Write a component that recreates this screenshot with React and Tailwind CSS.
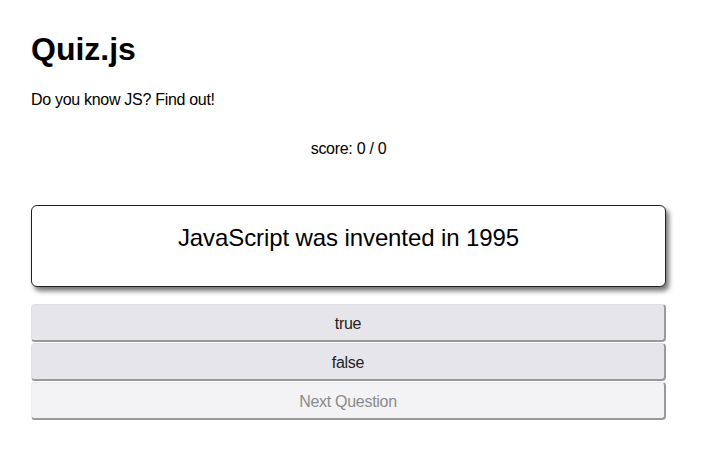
import React, { useState } from 'react';

const App = () => {
  const [score] = useState({ right: 0, total: 0 });

  return (
    <div className="min-h-screen bg-white p-[31px] font-['Liberation_Sans',Arial,sans-serif] text-black">
      <div className="w-[635px]">
        <h1 className="text-[32px] font-bold leading-[37px]">Quiz.js</h1>
        <p className="mt-[23px] text-[16px] leading-[18px] tracking-[-0.3px]">Do you know JS? Find out!</p>

        <p className="mt-[31px] text-center text-[16px] leading-[18px] tracking-[-0.3px]">
          score: {score.right} / {score.total}
        </p>

        {/* Question card */}
        <div className="mt-[47px] h-[82px] rounded-[6px] border border-[#222] bg-white pt-[18px] text-center text-[24px] leading-[28px] tracking-[-0.1px] shadow-[3px_4px_5px_rgba(0,0,0,0.55)]">
          JavaScript was invented in 1995
        </div>

        {/* Answers */}
        <div className="mt-[17px] flex flex-col gap-[1px]">
          <button className="h-[38px] w-full rounded-[4px] border-t border-l border-r-2 border-b-2 border-t-[#e0e0e4] border-l-[#e0e0e4] border-r-[#999] border-b-[#999] bg-[#e6e6ea] pt-[3px] text-[16px] tracking-[-0.3px] text-[#222]">
            true
          </button>
          <button className="h-[38px] w-full rounded-[4px] border-t border-l border-r-2 border-b-2 border-t-[#e0e0e4] border-l-[#e0e0e4] border-r-[#999] border-b-[#999] bg-[#e6e6ea] pt-[3px] text-[16px] tracking-[-0.3px] text-[#222]">
            false
          </button>
          <button className="h-[38px] w-full rounded-[4px] border-t border-l border-r-2 border-b-2 border-t-[#ececef] border-l-[#ececef] border-r-[#999] border-b-[#999] bg-[#f3f3f5] pt-[3px] text-[16px] tracking-[-0.3px] text-[#8a8a8a]">
            Next Question
          </button>
        </div>
      </div>
    </div>
  );
};

export default App;
